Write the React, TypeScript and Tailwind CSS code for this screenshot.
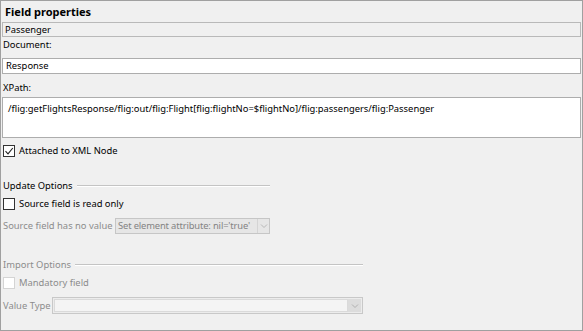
import React from "react";

function Check({ checked, disabled }: { checked?: boolean; disabled?: boolean }) {
  return (
    <span
      className={
        "w-[12px] h-[12px] shrink-0 flex items-center justify-center border bg-white " +
        (disabled ? "border-[#d4d4d4]" : "border-[#333333]")
      }
    >
      {checked && (
        <svg width="10" height="10" viewBox="0 0 10 10">
          <path d="M1.5 5.2 L4 7.8 L8.8 2" fill="none" stroke="#222" strokeWidth="1.1" />
        </svg>
      )}
    </span>
  );
}

function Chevron({ color }: { color: string }) {
  return (
    <svg width="8" height="6" viewBox="0 0 8 6">
      <path d="M1 1.5 L4 4.5 L7 1.5" fill="none" stroke={color} strokeWidth="1" />
    </svg>
  );
}

function GroupHeader({ label, width, disabled }: { label: string; width: string; disabled?: boolean }) {
  return (
    <div className={"flex items-center h-[16px] pl-[1px] " + width}>
      <span className={"whitespace-nowrap " + (disabled ? "text-[#8c8c8c]" : "text-black")}>{label}</span>
      <span className="ml-[4px] flex-1 h-[2px] border-t border-b border-t-[#c4c4c4] border-b-white" />
    </div>
  );
}

export default function App() {
  return (
    <div
      className="w-[583px] h-[331px] bg-[#f0f0f0] border border-[#a0a0a0] flex flex-col px-[1px] text-[9.4px] leading-none overflow-hidden whitespace-nowrap"
      style={{ fontFamily: '"Noto Sans", sans-serif' }}
    >
      <div className="h-[21px] flex items-center pl-[3px] font-bold text-[11px] text-black">Field properties</div>

      <div className="h-[15px] border border-[#b9b9b9] bg-[#f0f0f0] flex items-center pl-[2px] text-black">Passenger</div>

      <div className="h-[16px] flex items-center pl-[1px] text-black">Document:</div>

      <div className="mt-[5px] h-[16px] border border-[#adadad] bg-white flex items-center pl-[3px] text-black">Response</div>

      <div className="mt-[4px] h-[19px] flex items-center pl-[1px] text-black">XPath:</div>

      <div className="h-[41px] border border-[#adadad] bg-white pl-[5px] pt-[6px] text-black">
        /flig:getFlightsResponse/flig:out/flig:Flight[flig:flightNo=$flightNo]/flig:passengers/flig:Passenger
      </div>

      <div className="mt-[5px] h-[16px] flex items-center gap-[4px] pl-[1px] text-black">
        <Check checked />
        <span>Attached to XML Node</span>
      </div>

      <div className="mt-[19px]">
        <GroupHeader label="Update Options" width="w-[268px]" />
      </div>

      <div className="mt-[2px] h-[16px] flex items-center gap-[4px] pl-[1px] text-black">
        <Check />
        <span>Source field is read only</span>
      </div>

      <div className="mt-[6px] h-[16px] flex items-center pl-[1px]">
        <span className="text-[#8c8c8c] w-[112px] shrink-0">Source field has no value</span>
        <div className="w-[155px] h-[16px] border border-[#c6c6c6] bg-[#e6e6e6] flex items-center">
          <span className="flex-1 pl-[2px] text-[#838383] tracking-[-0.15px]">Set element attribute: nil='true'</span>
          <span className="w-[12px] h-full flex items-center justify-center border-l border-[#d4d4d4]">
            <Chevron color="#b8b8b8" />
          </span>
        </div>
      </div>

      <div className="mt-[23px]">
        <GroupHeader label="Import Options" width="w-[361px]" disabled />
      </div>

      <div className="mt-[2px] h-[16px] flex items-center gap-[4px] pl-[1px] text-[#8c8c8c]">
        <Check disabled />
        <span>Mandatory field</span>
      </div>

      <div className="mt-[6px] h-[17px] flex items-center pl-[1px]">
        <span className="text-[#8c8c8c] w-[49px] shrink-0">Value Type</span>
        <div className="w-[311px] h-[17px] border border-[#c8c8c8] bg-[#ececec] flex items-center p-[1px]">
          <span className="flex-1 h-full bg-[#f4f4f4] border border-[#dadada]" />
          <span className="w-[13px] h-full flex items-center justify-center bg-[#dcdcdc]">
            <Chevron color="#b0b0b0" />
          </span>
        </div>
      </div>
    </div>
  );
}
